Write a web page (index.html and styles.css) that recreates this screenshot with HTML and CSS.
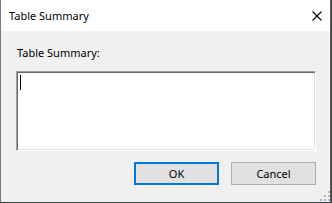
FILE: index.html
```html
<!DOCTYPE html>
<html>
<head lang="en">
    <meta charset="UTF-8">
    <title>Table Summary</title>
    <link rel="stylesheet" href="styles.css">
</head>
<body>
<div class="dialog">
    <div class="dialog-title">
        <span>Table Summary</span>
        <svg class="close-btn" width="10" height="10" viewBox="0 0 10 10">
            <path d="M0.5 0.5 L9.5 9.5 M9.5 0.5 L0.5 9.5" stroke="#000" stroke-width="1.1" fill="none"/>
        </svg>
    </div>
    <div class="dialog-body">
        <label class="summary-label">Table Summary:</label>
        <div class="summary-box"><span class="caret"></span></div>
        <div class="dialog-buttons">
            <div class="btn btn-default">OK</div>
            <div class="btn">Cancel</div>
        </div>
        <svg class="grip" width="10" height="10" viewBox="0 0 10 10">
            <rect x="8" y="0" width="2" height="2" fill="#b8b8b8"/>
            <rect x="4" y="4" width="2" height="2" fill="#b8b8b8"/>
            <rect x="8" y="4" width="2" height="2" fill="#b8b8b8"/>
            <rect x="0" y="8" width="2" height="2" fill="#b8b8b8"/>
            <rect x="4" y="8" width="2" height="2" fill="#b8b8b8"/>
            <rect x="8" y="8" width="2" height="2" fill="#b8b8b8"/>
        </svg>
    </div>
</div>
</body>
</html>
```

FILE: styles.css
```css
html, body {
    margin: 0px;
    padding: 0px;
    background: #3a3f47;
}
body {
    font-family: "Noto Sans", "Liberation Sans", sans-serif;
    font-size: 11px;
    line-height: 15px;
    color: #000000;
}
.dialog {
    width: 329px;
    height: 202px;
    border-left: #7a7a7a solid 1px;
    border-right: #5c5c5c solid 1px;
    background: #f0f0f0;
    display: flex;
    flex-direction: column;
}
.dialog-title {
    height: 31px;
    background: #ffffff;
    display: flex;
    align-items: center;
    justify-content: space-between;
    padding: 0px 8px 0px 8px;
}
.dialog-body {
    flex: 1;
    position: relative;
    padding: 14px 14px 0px 15px;
}
.summary-label {
    display: block;
    margin-left: 1px;
}
.summary-box {
    margin-top: 11px;
    width: 296px;
    height: 76px;
    background: #ffffff;
    border: 1px solid;
    border-color: #a0a0a0 #ffffff #ffffff #a0a0a0;
    box-shadow: inset 1px 1px 0px #696969, inset -1px -1px 0px #e3e3e3;
    padding: 1px;
}
.caret {
    display: block;
    width: 1px;
    height: 15px;
    margin: 2px 0px 0px 2px;
    background: #000000;
}
.dialog-buttons {
    display: flex;
    justify-content: flex-end;
    gap: 12px;
    margin-top: 11px;
}
.btn {
    width: 83px;
    height: 21px;
    line-height: 21px;
    text-align: center;
    background: #e1e1e1;
    border: #adadad solid 1px;
}
.btn-default {
    width: 81px;
    height: 19px;
    line-height: 19px;
    border: #0078d7 solid 2px;
}
.grip {
    position: absolute;
    right: 0px;
    bottom: 1px;
}
```
